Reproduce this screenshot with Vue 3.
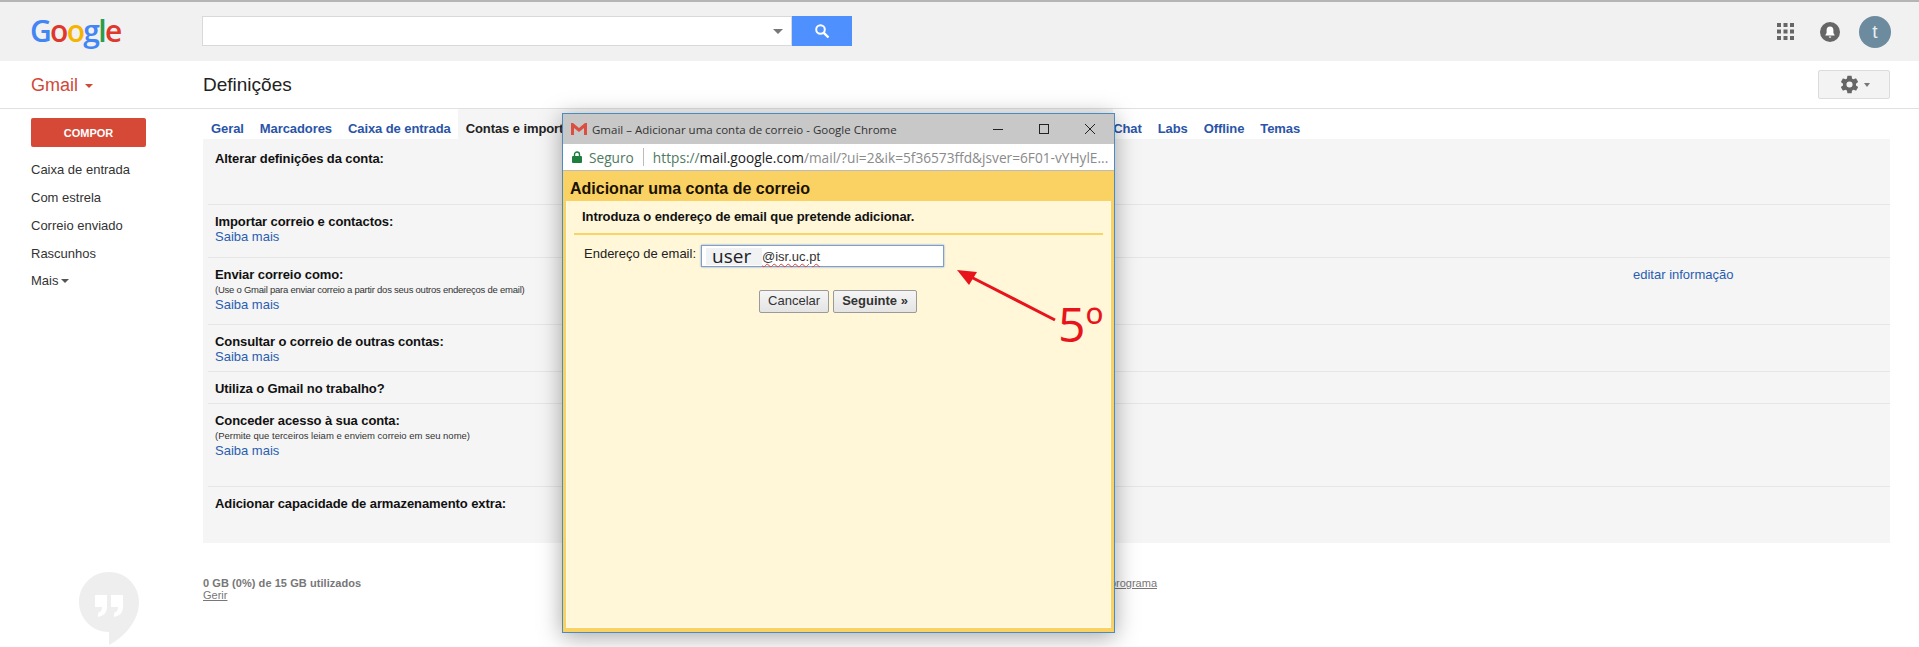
<script setup>
const sideItems = ['Caixa de entrada', 'Com estrela', 'Correio enviado', 'Rascunhos']
const rows = [
  { h: 65, first: true, title: 'Alterar definições da conta:' },
  { h: 53, title: 'Importar correio e contactos:', link: true },
  { h: 67, title: 'Enviar correio como:', note: '(Use o Gmail para enviar correio a partir dos seus outros endereços de email)', tight: true, link: true, edit: 'editar informação' },
  { h: 47, title: 'Consultar o correio de outras contas:', link: true },
  { h: 32, title: 'Utiliza o Gmail no trabalho?' },
  { h: 83, title: 'Conceder acesso à sua conta:', note: '(Permite que terceiros leiam e enviem correio em seu nome)', link: true },
  { h: 56, title: 'Adicionar capacidade de armazenamento extra:' }
]
</script>

<template>
  <div class="page">
    <header class="top">
      <div class="logo"><span class="b">G</span><span class="r">o</span><span class="y">o</span><span class="b">g</span><span class="g">l</span><span class="r">e</span></div>
      <div class="search">
        <div class="search-input"><i class="caret search-caret"></i></div>
        <div class="search-btn">
          <svg width="16" height="16" viewBox="0 0 16 16"><circle cx="6.5" cy="6.5" r="4.3" fill="none" stroke="#fff" stroke-width="2"/><path d="M9.8 9.8 14.5 14.5" stroke="#fff" stroke-width="2.4"/></svg>
        </div>
      </div>
      <div class="top-right">
        <svg class="apps" width="17" height="17" viewBox="0 0 17 17" fill="#666"><rect v-for="c in 9" :key="c" :x="(c-1)%3*6.5" :y="Math.floor((c-1)/3)*6.5" width="4" height="4"/></svg>
        <svg class="bell" width="20" height="20" viewBox="0 0 20 20"><circle cx="10" cy="10" r="10" fill="#666"/><path d="M10 4.5c-2.3 0-3.4 1.7-3.4 3.7v2.9L5.4 13v.6h9.2V13l-1.200-1.900V8.200c0-2-1.100-3.700-3.400-3.700zM8.700 14.400a1.300 1.300 0 0 0 2.600 0z" fill="#fff"/></svg>
        <div class="avatar">t</div>
      </div>
    </header>

    <div class="sub">
      <div class="gmail">Gmail<i class="caret gmail-caret"></i></div>
      <h1 class="heading">Definições</h1>
      <div class="gear-btn">
        <svg width="21" height="21" viewBox="0 0 24 24" fill="#666"><path d="M19.400 13c.04-.33.06-.66.06-1s-.02-.67-.06-1l2.100-1.650a.5.5 0 0 0 .12-.64l-2-3.460a.5.5 0 0 0-.61-.22l-2.490 1a7.300 7.300 0 0 0-1.690-.98l-.38-2.650A.49.49 0 0 0 14 2h-4a.49.49 0 0 0-.49.42l-.38 2.650c-.61.25-1.170.59-1.690.98l-2.490-1a.5.5 0 0 0-.61.22l-2 3.460a.49.49 0 0 0 .12.64L4.570 11c-.04.33-.07.67-.07 1s.03.67.07 1l-2.110 1.650a.5.5 0 0 0-.12.64l2 3.460c.12.22.39.3.61.22l2.490-1c.52.4 1.080.73 1.690.98l.38 2.650c.03.24.24.42.49.42h4c.25 0 .46-.18.49-.42l.38-2.650c.61-.25 1.170-.59 1.690-.98l2.490 1c.23.09.49 0 .61-.22l2-3.460a.5.5 0 0 0-.12-.64zM12 15.500a3.500 3.500 0 1 1 0-7 3.500 3.500 0 0 1 0 7z"/></svg>
        <i class="caret gear-caret"></i>
      </div>
    </div>

    <div class="body">
      <aside class="side">
        <div class="compose">COMPOR</div>
        <ul class="side-list">
          <li v-for="s in sideItems" :key="s">{{ s }}</li>
          <li class="more">Mais<i class="caret more-caret"></i></li>
        </ul>
        <div class="hangouts">
          <svg width="60" height="73" viewBox="0 0 60 73"><path d="M30 0C13.400 0 0 13.400 0 30s13.400 30 30 30v13c15-7.500 30-24 30-43C60 13.400 46.600 0 30 0z" fill="#eeeeee"/><path d="M16 23h12v12c0 6-4 9-9 10v-4c3-1 4-3 4-6h-7zM32 23h12v12c0 6-4 9-9 10v-4c3-1 4-3 4-6h-7z" fill="#fff"/></svg>
        </div>
      </aside>

      <main class="main">
        <nav class="tabs">
          <a class="tab tab-geral">Geral</a>
          <a class="tab">Marcadores</a>
          <a class="tab">Caixa de entrada</a>
          <span class="tab tab-active">Contas e importação</span>
          <a class="tab">Chat</a>
          <a class="tab">Labs</a>
          <a class="tab">Offline</a>
          <a class="tab">Temas</a>
        </nav>
        <section class="panel">
          <div v-for="r in rows" :key="r.title" class="row" :class="{ first: r.first }" :style="{ height: r.h + 'px' }">
            <div class="row-left">
              <div class="row-title">{{ r.title }}</div>
              <div v-if="r.note" class="row-note" :class="{ tight: r.tight }">{{ r.note }}</div>
              <a v-if="r.link" class="link">Saiba mais</a>
            </div>
            <a v-if="r.edit" class="edit">{{ r.edit }}</a>
          </div>
        </section>
        <footer class="foot">
          <div class="usage"><b>0 GB (0%) de 15 GB utilizados</b><u>Gerir</u></div>
          <u class="policies">Políticas do programa</u>
        </footer>
      </main>
    </div>

    <div class="win">
      <div class="win-title">
        <svg class="m-icon" width="16" height="12" viewBox="0 0 16 12"><path d="M0 0h2l6 5 6-5h2v12h-3V5L8 9 3 5v7H0z" fill="#dc4e41"/></svg>
        <span class="win-text">Gmail – Adicionar uma conta de correio - Google Chrome</span>
        <svg class="ctl" width="126" height="12" viewBox="0 0 126 12" fill="none" stroke="#222" stroke-width="1"><path d="M0 6.500h10"/><rect x="46.500" y="1.500" width="9" height="9"/><path d="M92 1l10 10M102 1 92 11"/></svg>
      </div>
      <div class="win-addr">
        <svg width="10" height="12" viewBox="0 0 10 12"><rect x="0" y="5" width="10" height="7" rx="1" fill="#1e7e3e"/><path d="M2.500 5.500V3.500a2.500 2.500 0 0 1 5 0v2" fill="none" stroke="#1e7e3e" stroke-width="1.400"/></svg>
        <span class="secure">Seguro</span>
        <i class="addr-sep"></i>
        <span class="url"><span class="u-green">https://</span><span class="u-dark">mail.google.com</span><span>/mail/?ui=2&amp;ik=5f36573ffd&amp;jsver=6F01-vYHylE...</span></span>
      </div>
      <div class="dlg">
        <div class="dlg-head">Adicionar uma conta de correio</div>
        <div class="dlg-body">
          <div class="dlg-intro">Introduza o endereço de email que pretende adicionar.</div>
          <div class="dlg-form">
            <span class="dlg-label">Endereço de email:</span>
            <div class="dlg-input"><span class="user">user</span><span class="domain">@isr.uc.pt</span></div>
          </div>
          <div class="dlg-actions">
            <span class="btn">Cancelar</span>
            <span class="btn btn-next">Seguinte »</span>
          </div>
        </div>
      </div>
    </div>

    <svg class="arrow" width="110" height="60" viewBox="0 0 110 60"><path d="M98 50 14 7" stroke="#e8141c" stroke-width="3" fill="none"/><path d="M0 0 20 2 12 15z" fill="#e8141c"/></svg>
    <div class="step">5º</div>
  </div>
</template>

<style>
html, body { margin: 0; background: #fff; }
</style>

<style scoped>
.page {
  position: relative;
  width: 1919px;
  height: 647px;
  overflow: hidden;
  background: #fff;
  font-family: "Liberation Sans", Arial, sans-serif;
  font-size: 13px;
  color: #222;
}
.caret {
  display: inline-block;
  width: 0;
  height: 0;
  border-left: 4px solid transparent;
  border-right: 4px solid transparent;
  border-top: 4px solid #777;
}
.top {
  height: 59px;
  border-top: 2px solid #b5b5b5;
  background: #f1f1f1;
  display: flex;
  align-items: center;
  box-sizing: content-box;
}
.logo {
  width: 202px;
  flex: none;
  padding-left: 30px;
  box-sizing: border-box;
  font-family: "Open Sans", sans-serif;
  font-size: 30px;
  font-weight: 600;
  letter-spacing: -1.700px;
  line-height: 40px;
  margin-top: -2px;
}
.b { color: #4285f4; }
.r { color: #e0372c; }
.y { color: #f4b400; }
.g { color: #2a9d4a; }
.search {
  display: flex;
  width: 650px;
  height: 30px;
  margin-top: -1px;
}
.search-input {
  flex: 1;
  background: #fff;
  border: 1px solid #d9d9d9;
  display: flex;
  align-items: center;
  justify-content: flex-end;
  padding-right: 8px;
}
.search-caret { border-left-width: 5px; border-right-width: 5px; border-top-width: 5px; }
.search-btn {
  width: 60px;
  background: #4d90fe;
  display: flex;
  align-items: center;
  justify-content: center;
}
.top-right {
  margin-left: auto;
  padding-right: 28px;
  display: flex;
  align-items: center;
}
.apps { margin-right: 26px; }
.bell { margin-right: 19px; }
.avatar {
  width: 32px;
  height: 32px;
  border-radius: 50%;
  background: #6c8b9f;
  color: #e8eef2;
  font-size: 19px;
  line-height: 31px;
  text-align: center;
}
.sub {
  height: 47px;
  border-bottom: 1px solid #e0e0e0;
  display: flex;
  align-items: center;
}
.gmail {
  width: 203px;
  padding-left: 31px;
  box-sizing: border-box;
  font-size: 18px;
  color: #d14836;
  margin-top: 2px;
}
.gmail-caret { border-top-color: #d14836; margin-left: 7px; vertical-align: 3px; }
.heading {
  margin: 0;
  font-size: 19px;
  font-weight: 400;
  color: #222;
  font-family: "Liberation Sans", sans-serif;
}
.gear-btn {
  margin-left: auto;
  margin-right: 29px;
  width: 70px;
  height: 27px;
  border: 1px solid #dcdcdc;
  background: #f3f3f3;
  border-radius: 2px;
  display: flex;
  align-items: center;
  justify-content: center;
  gap: 4px;
}
.gear-caret { border-left-width: 3.500px; border-right-width: 3.500px; }
.body { display: flex; }
.side {
  width: 203px;
  flex: none;
  position: relative;
  height: 538px;
}
.compose {
  margin: 9px 0 0 31px;
  width: 115px;
  height: 29px;
  background: #d64937;
  border-radius: 2px;
  color: #fff;
  font-size: 11px;
  font-weight: 700;
  line-height: 30px;
  text-align: center;
}
.side-list {
  list-style: none;
  margin: 9px 0 0;
  padding: 0 0 0 31px;
  color: #333;
}
.side-list li { height: 28px; line-height: 28px; }
.side-list li.more { margin-top: -1px; }
.more-caret { margin-left: 3px; vertical-align: 2px; border-left-width: 4px; border-right-width: 4px; border-top-color: #555; }
.hangouts { position: absolute; left: 79px; top: 463px; }
.main { flex: 1; }
.tabs {
  height: 30px;
  display: flex;
  align-items: flex-start;
  font-size: 13px;
  font-weight: 700;
  line-height: 15px;
  letter-spacing: -0.085px;
}
.tab { color: #2a54a8; padding-top: 12px; padding-right: 16px; white-space: nowrap; }
.tab-geral { margin-left: 8px; }
.tab-active {
  color: #222;
  background: #f5f5f5;
  margin-left: -9px;
  padding: 12px 8px 3px;
  width: 639.500px;
  box-sizing: content-box;
  overflow: hidden;
}
.panel {
  margin-right: 29px;
  height: 404px;
  background: #f5f5f5;
  padding-left: 5px;
}
.row {
  box-sizing: border-box;
  border-top: 1px solid #e6e6e6;
  padding: 9px 0 0 7px;
  display: flex;
}
.row.first { border-top: 0; padding-top: 12px; }
.row-left { width: 1418px; }
.row-title { font-weight: 700; line-height: 15px; color: #111; letter-spacing: -0.085px; }
.row-note { font-size: 9.500px; line-height: 14px; margin-top: 1px; color: #333; }
.row-note.tight { letter-spacing: -0.240px; }
.link { display: block; line-height: 15px; color: #2a5db0; }
.edit { color: #2a5db0; line-height: 15px; white-space: nowrap; }
.foot {
  display: flex;
  justify-content: space-between;
  margin-top: 34px;
  width: 954px;
  font-size: 11px;
  color: #777;
  line-height: 12px;
}
.usage { display: flex; flex-direction: column; align-items: flex-start; }
.usage b { letter-spacing: 0.060px; }
.policies { white-space: nowrap; }
.win {
  position: absolute;
  left: 562px;
  top: 113px;
  width: 553px;
  height: 520px;
  box-sizing: border-box;
  border: 1px solid #4a8cbc;
  background: #c8c8c8;
  box-shadow: 0 4px 22px rgba(0, 0, 0, 0.35);
  display: flex;
  flex-direction: column;
}
.win-title {
  height: 30px;
  flex: none;
  display: flex;
  align-items: center;
  padding-left: 8px;
  font-family: "Open Sans", sans-serif;
  font-size: 11.500px;
  color: #333;
  position: relative;
}
.m-icon { margin-right: 5px; }
.ctl { position: absolute; left: 430px; top: 9px; }
.win-addr {
  height: 27px;
  flex: none;
  background: #fff;
  border-bottom: 1px solid #bbb;
  box-sizing: border-box;
  display: flex;
  align-items: center;
  padding-left: 9px;
  font-family: "Open Sans", sans-serif;
  font-size: 13.700px;
  white-space: nowrap;
  color: #8a8a8a;
}
.secure { margin-left: 7px; color: #4f7a60; }
.addr-sep { width: 1px; height: 18px; background: #bbb; margin: 0 9px; }
.u-green { color: #4f7a60; }
.u-dark { color: #222; }
.dlg {
  flex: 1;
  background: #fad163;
  display: flex;
  flex-direction: column;
  padding: 0 3px 4px;
  min-height: 0;
}
.dlg-head {
  height: 30px;
  flex: none;
  font-size: 16px;
  font-weight: 700;
  line-height: 35px;
  color: #1a1200;
  padding-left: 4px;
}
.dlg-body {
  flex: 1;
  background: #fff7d8;
  border: 1px solid #fffbea;
  border-top: 0;
  padding: 0 7px;
}
.dlg-intro {
  height: 32px;
  border-bottom: 2px solid #f6d566;
  font-weight: 700;
  line-height: 32px;
  color: #111;
  padding-left: 8px;
  letter-spacing: -0.080px;
}
.dlg-form {
  display: flex;
  align-items: flex-start;
  margin-top: 10px;
  padding-left: 10px;
}
.dlg-label { line-height: 17px; color: #222; margin-right: 5px; }
.dlg-input {
  width: 243px;
  height: 22px;
  box-sizing: border-box;
  border: 1px solid #7d9fd0;
  box-shadow: 0 0 2px #7d9fd0;
  background: #fff;
  display: flex;
  align-items: center;
  padding-left: 4px;
}
.user {
  width: 56px;
  box-sizing: border-box;
  padding-left: 6px;
  background: #f0f2f4;
  font-family: "Open Sans", sans-serif;
  font-size: 19px;
  line-height: 17px;
  color: #222;
}
.domain {
  text-decoration: underline wavy #e04040 1px;
  text-underline-offset: 2px;
  color: #333;
}
.dlg-actions {
  display: flex;
  justify-content: center;
  gap: 4px;
  margin-top: 23px;
  padding-right: 1px;
}
.btn {
  height: 21px;
  line-height: 20px;
  padding: 0 8px;
  border: 1px solid #9a9a9a;
  border-radius: 2px;
  background: linear-gradient(#f5f5f5, #e4e4e4);
  color: #333;
}
.btn-next { font-weight: 700; }
.arrow { position: absolute; left: 957px; top: 270px; }
.step {
  position: absolute;
  left: 1058px;
  top: 293px;
  font-family: "Open Sans", sans-serif;
  font-size: 48px;
  line-height: 62px;
  color: #e8141c;
}
</style>
